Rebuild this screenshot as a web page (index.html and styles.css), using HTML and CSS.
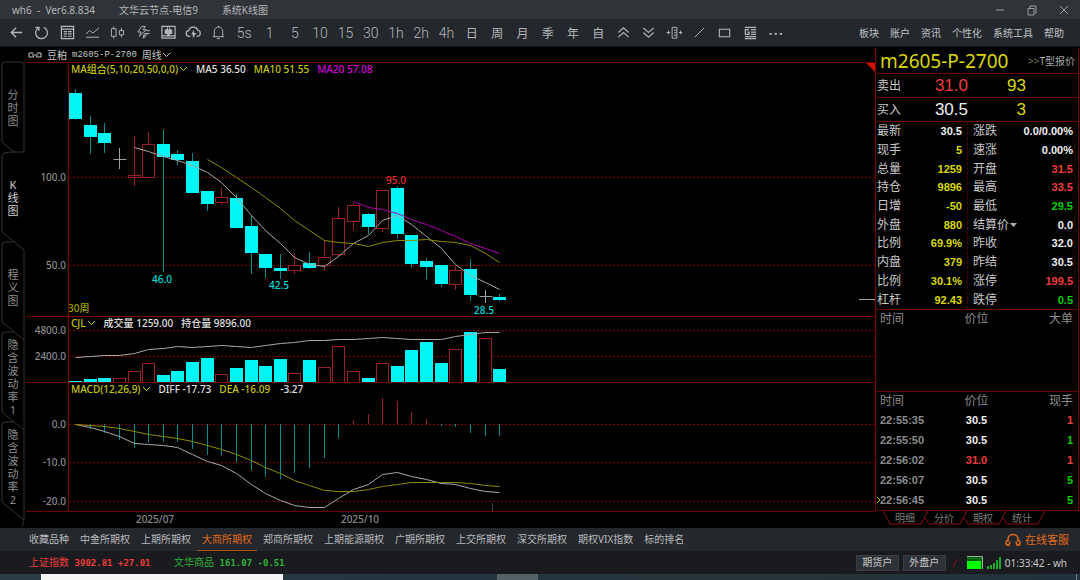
FILE: index.html
```html
<!DOCTYPE html>
<html lang="zh-CN">
<head>
<meta charset="utf-8">
<title>wh6 - Ver6.8.834</title>
<link rel="stylesheet" href="styles.css">
</head>
<body>
<header class="titlebar">
  <span>wh6&nbsp; -&nbsp; Ver6.8.834</span>
  <span>文华云节点-电信9</span>
  <span>系统K线图</span>
  <div class="window-controls">
    <button type="button" aria-label="最小化"><svg width="12" height="12" viewBox="0 0 12 12"><path d="M2 6H10"/></svg></button>
    <button type="button" aria-label="还原"><svg width="12" height="12" viewBox="0 0 12 12"><path d="M2 4.500H8V11H2ZM4 4V2H10V9H8.500"/></svg></button>
    <button type="button" aria-label="关闭"><svg width="12" height="12" viewBox="0 0 12 12"><path d="M2 2L10 10M10 2L2 10"/></svg></button>
  </div>
</header>

<div class="toolbar">
  <div class="tools">
    <button type="button" aria-label="返回"><svg class="icon" viewBox="0 0 16 16"><path stroke-width="1.500" d="M14 8H3M7.500 3L2.500 8L7.500 13"/></svg></button>
    <button type="button" aria-label="刷新"><svg class="icon" viewBox="0 0 16 16"><path stroke-width="1.300" d="M5 2.800A6.300 6.300 0 1 0 10.500 2.500M1.500 2.500H5.300V6.300"/></svg></button>
    <button type="button" aria-label="报价"><svg class="icon" viewBox="0 0 16 16"><path stroke-width="1.300" d="M1.500 1.500H14.500V14.500H1.500ZM1.500 4.500H14.500M4 7H7.500M8.500 7H12.500M4 9.500H7.500M8.500 9.500H12.500M4 12H7.500M8.500 12H12.500"/></svg></button>
    <button type="button" aria-label="分时"><svg class="icon" viewBox="0 0 16 16"><path d="M1 9.500L5 6L8.500 8.500L15 3M1 13H15"/></svg></button>
    <button type="button" aria-label="K线"><svg class="icon" viewBox="0 0 16 16"><path d="M1.500 4H6.500V12H1.500ZM4 1.500V4M4 12V14.500M10 6H14.500V10.500H10ZM12.200 3V6M12.200 10.500V13"/></svg></button>
    <button type="button" aria-label="闪电"><svg class="icon" viewBox="0 0 16 16"><path d="M6 1.500H10L7.500 5H11L3.500 12L5.500 7.500H2ZM11 6H15M9 9H14.500M8.500 12L12 9.500M9 9L7.500 14L11 11.500"/></svg></button>
    <button type="button" aria-label="下单"><svg class="icon" viewBox="0 0 16 16"><path stroke-width="1.300" d="M1 1.500H15V14H1ZM1 11.500H15"/><path class="solid" d="M4 5L6.500 4V2.500H7.500V5H8.500V2.500H9.500V4L12 5V9.500H9.500V12H6.500V9.500H4Z"/></svg></button>
    <button type="button" aria-label="云"><svg class="icon wide" viewBox="0 0 16 16"><path stroke-width="1.300" d="M5 12H3.500A3 3 0 0 1 3 6A5 5 0 0 1 12.500 5.500A3.300 3.300 0 0 1 12.500 12H11"/><path class="solid" d="M8.500 5L5.500 10H7.500L7 14.500L11 8.500H8.500Z"/></svg></button>
    <button type="button" aria-label="预警"><svg class="icon" viewBox="0 0 16 16"><path d="M2 12.500H14M3.500 12.500V7A4.500 5 0 0 1 12.500 7V12.500M8 2.500V1M6.500 14.500H9.500"/></svg></button>
    <button type="button">5s</button>
    <button type="button">1</button>
    <button type="button">5</button>
    <button type="button">10</button>
    <button type="button">15</button>
    <button type="button">30</button>
    <button type="button">1h</button>
    <button type="button">2h</button>
    <button type="button">4h</button>
    <button type="button" class="cjk">日</button>
    <button type="button" class="cjk">周</button>
    <button type="button" class="cjk">月</button>
    <button type="button" class="cjk">季</button>
    <button type="button" class="cjk">年</button>
    <button type="button" class="cjk">自</button>
    <button type="button" aria-label="上一个"><svg class="icon" viewBox="0 0 16 16"><path stroke-width="1.200" d="M2.500 8L8 3L13.500 8M2.500 13L8 8L13.500 13"/></svg></button>
    <button type="button" aria-label="下一个"><svg class="icon" viewBox="0 0 16 16"><path stroke-width="1.200" d="M2.500 3L8 8L13.500 3M2.500 8L8 13L13.500 8"/></svg></button>
    <button type="button" aria-label="测距"><svg class="icon wide" viewBox="0 0 18 16"><path d="M6.500 2.500H11.500V14H6.500ZM8.500 5.500H11M8.500 8.300H11M8.500 11H11M.500 8H4.500M2.500 6V10M13.500 8H17.500M15.500 6V10"/></svg></button>
    <button type="button" aria-label="画线"><svg class="icon" viewBox="0 0 16 16"><path d="M3 13L13 3"/></svg></button>
    <button type="button" aria-label="矩形"><svg class="icon" viewBox="0 0 16 16"><path stroke-width="1.200" d="M2.500 4.500H13.500V12.500H2.500Z"/></svg></button>
    <button type="button" aria-label="信息"><svg class="icon" viewBox="0 0 16 16"><path stroke-width="1.300" d="M2 2.500H14M8.500 5H14M8.500 7.500H14M8.500 10H14M2 12.500H14M2 14.500H14M6.500 5H2.500V10H6.500V7.500H4.500"/></svg></button>
    <button type="button" aria-label="更多"><svg class="icon" viewBox="0 0 16 16"><path class="solid" d="M1.500 8.500h2.500v2H1.500zM7 8.500h2.500v2H7zM12.500 8.500h2.500v2h-2.500z"/></svg></button>
  </div>
  <nav class="menu">
    <a href="#">板块</a><a href="#">账户</a><a href="#">资讯</a><a href="#">个性化</a><a href="#">系统工具</a><a href="#">帮助</a>
  </nav>
</div>

<main class="workspace">
  <nav class="side-tabs">
    <button type="button" class="boxed"><svg width="26" height="90"><path d="M24 90H14L2 80V3Q2 0 5 0H22Q24 0 24 3V90"/></svg><span>分</span><span>时</span><span>图</span></button>
    <button type="button" class="active"><svg width="26" height="90"><path d="M14 0Q2 0 2 4V80L24 98"/></svg><span>K</span><span>线</span><span>图</span></button>
    <button type="button"><svg width="26" height="90"><path d="M14 0H5Q2 0 2 3V80L24 98M24 8V90"/></svg><span>程</span><span>义</span><span>图</span></button>
    <button type="button"><svg width="26" height="90"><path d="M14 0H5Q2 0 2 3V80L24 98M24 0V90"/></svg><span>隐</span><span>含</span><span>波</span><span>动</span><span>率</span><span>1</span></button>
    <button type="button"><svg width="26" height="90"><path d="M14 0H5Q2 0 2 3V80L24 98L22 105M24 0V98"/></svg><span>隐</span><span>含</span><span>波</span><span>动</span><span>率</span><span>2</span></button>
  </nav>

  <section class="chart">
    <div class="chart-title">
      <svg width="14" height="8" viewBox="0 0 14 8"><path d="M5.500 2H1V6H5.500V5M8.500 2H13V6H8.500V5M4 4H10"/></svg>
      <span>豆粕</span><span class="code">m2605-P-2700</span>
      <button type="button" class="period">周线<svg width="9" height="6" viewBox="0 0 9 6"><path d="M1 1L4.500 4.500L8 1"/></svg></button>
    </div>
    <div class="pane price">
      <svg class="corner" width="9" height="9"><path d="M0 0H9V9Z"/></svg>
      <div class="legend"><button type="button" class="yellow">MA组合(5,10,20,50,0,0)<svg width="10" height="6" viewBox="0 0 10 6"><path d="M2 1L5.500 4.500L9 1"/></svg></button><span>MA5 36.50</span><span class="yellow">MA10 51.55</span><span class="magenta">MA20 57.08</span></div>
      <svg class="plot" id="price"></svg>
    </div>
    <div class="pane volume">
      <div class="legend"><button type="button" class="yellow">CJL<svg width="10" height="6" viewBox="0 0 10 6"><path d="M2 1L5.500 4.500L9 1"/></svg></button><span>成交量 1259.00</span><span>持仓量 9896.00</span></div>
      <svg class="plot" id="volume"></svg>
    </div>
    <div class="pane macd">
      <div class="legend"><button type="button" class="yellow">MACD(12,26,9)<svg width="10" height="6" viewBox="0 0 10 6"><path d="M2 1L5.500 4.500L9 1"/></svg></button><span>DIFF -17.73</span><span class="yellow">DEA -16.09</span><span class="hist">-3.27</span></div>
      <svg class="plot" id="macd"></svg>
    </div>
    <svg class="dates" id="dates"></svg>
  </section>

  <aside class="quote">
    <div class="quote-box">
      <div class="contract"><h1>m2605-P-2700</h1><a href="#"><i>&gt;&gt;</i>T型报价</a></div>
      <div class="bidask"><span>卖出</span><b class="red">31.0</b><b class="yellow">93</b></div>
      <div class="bidask"><span>买入</span><b>30.5</b><b class="yellow">3</b></div>
      <div class="stats">
        <dl>
          <div><dt>最新</dt><dd>30.5</dd></div>
          <div><dt>现手</dt><dd class="yellow">5</dd></div>
          <div><dt>总量</dt><dd class="yellow">1259</dd></div>
          <div><dt>持仓</dt><dd class="yellow">9896</dd></div>
          <div><dt>日增</dt><dd class="yellow">-50</dd></div>
          <div><dt>外盘</dt><dd class="yellow">880</dd></div>
          <div><dt>比例</dt><dd class="yellow">69.9%</dd></div>
          <div><dt>内盘</dt><dd class="yellow">379</dd></div>
          <div><dt>比例</dt><dd class="yellow">30.1%</dd></div>
          <div><dt>杠杆</dt><dd class="yellow">92.43</dd></div>
        </dl>
        <dl>
          <div><dt>涨跌</dt><dd>0.0/0.00%</dd></div>
          <div><dt>速涨</dt><dd>0.00%</dd></div>
          <div><dt>开盘</dt><dd class="red">31.5</dd></div>
          <div><dt>最高</dt><dd class="red">33.5</dd></div>
          <div><dt>最低</dt><dd class="green">29.5</dd></div>
          <div><dt><button type="button">结算价<svg width="8" height="4"><path d="M1 0H8L4.500 4Z"/></svg></button></dt><dd>0.0</dd></div>
          <div><dt>昨收</dt><dd>32.0</dd></div>
          <div><dt>昨结</dt><dd>30.5</dd></div>
          <div><dt>涨停</dt><dd class="red">199.5</dd></div>
          <div><dt>跌停</dt><dd class="green">0.5</dd></div>
        </dl>
      </div>
      <div class="large-orders">
        <table><thead><tr><th>时间</th><th>价位</th><th>大单</th></tr></thead></table>
      </div>
      <div class="trades">
        <svg class="marker" width="5" height="8"><path d="M1 1L4 4L1 7"/></svg>
        <table>
          <thead><tr><th>时间</th><th>价位</th><th>现手</th></tr></thead>
          <tbody>
            <tr><td>22:55:35</td><td>30.5</td><td class="red">1</td></tr>
            <tr><td>22:55:50</td><td>30.5</td><td class="green">1</td></tr>
            <tr><td>22:56:02</td><td class="red">31.0</td><td class="red">1</td></tr>
            <tr><td>22:56:07</td><td>30.5</td><td class="green">5</td></tr>
            <tr><td>22:56:45</td><td>30.5</td><td class="green">5</td></tr>
          </tbody>
        </table>
      </div>
    </div>
    <nav class="quote-tabs">
      <button type="button"><svg width="46" height="14"><path d="M0 0L7 13H38L45 0"/></svg>明细</button>
      <button type="button"><svg width="46" height="14"><path d="M3 7L7 13H38L45 0"/></svg>分价</button>
      <button type="button"><svg width="46" height="14"><path d="M3 7L7 13H38L45 0"/></svg>期权</button>
      <button type="button"><svg width="46" height="14"><path d="M3 7L7 13H38L45 0"/></svg>统计</button>
    </nav>
  </aside>
</main>

<div class="markets">
  <nav>
    <a href="#">收藏品种</a><a href="#">中金所期权</a><a href="#">上期所期权</a><a href="#" class="active">大商所期权</a><a href="#">郑商所期权</a><a href="#">上期能源期权</a><a href="#">广期所期权</a><a href="#">上交所期权</a><a href="#">深交所期权</a><a href="#">期权VIX指数</a><a href="#">标的排名</a>
  </nav>
  <a href="#" class="service"><svg width="18" height="14" viewBox="0 0 18 14"><path d="M5 12.500L6 8.500M5 7.500Q2 7 2 10Q2 12.500 5 12.500M4 8Q3.500 1.500 9 1.500Q14.500 1.500 14 8M13 12.500L12 8.500M13 7.500Q16 7 16 10Q16 12.500 13 12.500"/></svg>在线客服</a>
</div>

<footer class="status">
  <span class="index red">上证指数 <code>3902.81 +27.01</code></span>
  <span class="index up-green">文华商品 <code>161.07 -0.51</code></span>
  <div class="account">
    <button type="button">期货户</button>
    <button type="button">外盘户</button>
    <svg class="slash" width="6" height="10"><path d="M1 9L5 1"/></svg>
    <svg width="16" height="14"><rect x="0" y="0" width="15" height="13" fill="#005a10" stroke="none"/><path d="M0 .500H15.500V13" fill="none" stroke="#9ab09a"/><path d="M0 2.500H15" stroke="#00a000" stroke-dasharray="1 1"/><rect x="0" y="5" width="14" height="8" fill="#00ff00" stroke="none"/></svg>
    <svg width="14" height="14"><path d="M0 10h2v3H0zM3 9h2v4H3zM6 7h2v6H6zM9 4h2v9H9zM12 1h2v12h-2z" fill="#1fa82e" stroke="none"/></svg>
    <span>01:33:42 - wh</span>
  </div>
</footer>
<div class="taskbar"><span class="search"></span><span class="task"></span><span class="edge"></span></div>
<script src="chart.js"></script>
</body>
</html>
```

FILE: styles.css
```css
* { box-sizing: border-box; }
html, body { height: 100%; }
body {
  margin: 0;
  min-height: 580px;
  display: flex;
  flex-direction: column;
  background: #000;
  color: #c8c8c8;
  font: 10px/14px "Noto Sans", "Noto Sans CJK SC", sans-serif;
  overflow: hidden;
}
button { appearance: none; border: 0; padding: 0; margin: 0; background: none; color: inherit; font: inherit; white-space: nowrap; }
a { color: inherit; text-decoration: none; white-space: nowrap; }
svg { fill: none; stroke: currentColor; display: block; flex: none; }
.yellow { color: #c8c800; }
.magenta { color: #d800d8; }
.red { color: #f03c3c; }
.green { color: #00d000; }
.up-green { color: #30b038; }

.titlebar { display: flex; gap: 24px; align-items: center; height: 19px; padding: 0 10px 0 12px; background: #303338; color: #b4b6b8; flex: none; }
.window-controls { margin-left: auto; display: flex; gap: 20px; color: #9a9c9e; }

.toolbar { display: flex; align-items: center; justify-content: space-between; height: 28px; padding: 0 16px 0 4px; background: #24282d; border-bottom: 1px solid #14171a; flex: none; }
.tools { flex: 0 1 784px; display: grid; grid-auto-flow: column; grid-auto-columns: 1fr; align-items: center; justify-items: center; color: #b4b6b8; font: 300 14px/16px Roboto, sans-serif; }
.tools .cjk { font: 400 12px/16px "Noto Sans CJK SC", sans-serif; }
.icon { width: 15px; height: 15px; }
.icon.wide { width: 17px; }
.icon .solid { fill: currentColor; stroke: none; }
.menu { display: flex; gap: 11px; color: #c0c2c4; }

.workspace { flex: 1 0 auto; display: flex; min-width: 0; }
.side-tabs { flex: none; width: 26px; padding-top: 15px; display: flex; flex-direction: column; color: #8c8c8c; }
.side-tabs button { position: relative; height: 90px; display: flex; flex-direction: column; align-items: center; justify-content: center; font-size: 11px; line-height: 13px; }
.side-tabs svg { position: absolute; top: 0; left: 0; stroke: #333; overflow: visible; }
.side-tabs .active { color: #d0d0d0; }

.chart { flex: 1; min-width: 0; display: flex; flex-direction: column; }
.chart-title { display: flex; align-items: center; gap: 5px; height: 15px; padding-left: 2px; }
.chart-title .code { font: 9px/14px "Liberation Mono", monospace; }
.period, .legend button { display: flex; align-items: center; }
.pane { position: relative; border-top: 1px solid #700000; }
.legend { display: flex; gap: 8px; align-items: center; height: 15px; padding: 0 0 3px 45px; line-height: 12px; color: #e0e0e0; font-weight: 500; }
.legend .yellow { color: #c8c800; }
.legend .magenta { color: #d800d8; }
.legend .hist { padding-left: 2px; }
.volume .legend, .macd .legend { height: 13px; padding-bottom: 1px; }
.pane::before { content: ""; position: absolute; left: 42px; top: 0; bottom: 0; border-left: 1px solid #700000; }
.macd { border-bottom: 1px solid #700000; }
.corner { position: absolute; right: 0; top: 0; fill: #c81400; stroke: none; }
.plot { width: 100%; overflow: visible; }
#price { height: 238px; }
#volume { height: 52px; }
#macd { height: 115px; }
.dates { width: 100%; height: 16px; }
.plot text, .dates text { stroke: none; fill: #8c8c8c; font-weight: 500; }
.plot .grid { stroke: #800000; stroke-dasharray: 2 2; }
.plot .down { stroke: #008c8c; }
.plot .down-body { fill: #00f5f5; stroke: none; }
.plot .up { stroke: #982020; }
.plot .up-body { fill: #000; stroke: #982020; }
.plot .flat { stroke: #a0a0a0; }
.plot .tick { stroke: #484848; }
.plot .line-white { stroke: #a8a8a8; }
.plot .line-yellow { stroke: #8c8c00; }
.plot .line-magenta { stroke: #b000b0; }
.plot text.cyan { fill: #00dcdc; }
.plot text.high { fill: #e03030; }
.plot text.weeks { fill: #a0a000; }

.quote { flex: 0 0 205px; padding: 1px 1px 0 0; display: flex; flex-direction: column; }
.quote-box { border: 1px solid #700000; border-top: 0; }
.contract { display: flex; align-items: center; justify-content: space-between; height: 25px; padding: 0 3px 0 4px; }
.contract h1 { margin: 0; font: 19px/24px "Noto Sans", sans-serif; color: #d8d800; }
.contract a { color: #a8a8a8; }
.contract i { font-style: normal; color: #787858; }
.bidask { display: grid; grid-template-columns: 31px 60px 58px; align-items: center; height: 24px; padding-left: 1px; border-top: 1px solid #700000; font-size: 12px; line-height: 16px; white-space: nowrap; }
.bidask b { font: 17px/20px "Liberation Sans", sans-serif; text-align: right; }
.bidask b.yellow { color: #d8d800; }
.bidask b:not([class]) { color: #f0f0f0; }
.stats { display: grid; grid-template-columns: 91px 1fr; border-top: 1px solid #700000; height: 188px; font-size: 12px; }
.stats dl { margin: 0; display: flex; flex-direction: column; justify-content: space-around; padding: 0 5px 0 1px; }
.stats dl + dl { border-left: 1px dashed #500000; padding-left: 5px; }
.stats dl div { display: flex; justify-content: space-between; align-items: center; line-height: 18px; }
.stats dt button { display: flex; align-items: center; }
.stats dt svg { fill: #b0b0b0; stroke: none; }
dd, td { margin: 0; font: bold 11px/18px "Liberation Sans", sans-serif; }
dd:not([class]), td:not([class]) { color: #f0f0f0; }
dd.yellow { color: #d8d800; }
.large-orders, .trades { position: relative; border-top: 1px solid #700000; }
.large-orders { height: 82px; }
table { width: 100%; border-collapse: collapse; table-layout: fixed; color: #8c8c8c; }
th { padding: 0 5px 0 4px; font-weight: 400; font-size: 12px; line-height: 18px; text-align: center; }
td { padding: 0 5px 0 4px; line-height: 20px; text-align: center; }
th:first-child, td:first-child { text-align: left; }
td:first-child:not([class]) { color: #8c8c8c; }
th:last-child, td:last-child { text-align: right; }
.marker { position: absolute; left: 0; bottom: 6px; stroke: #c8c800; }
.quote-tabs { display: flex; padding-left: 8px; color: #7c7c7c; }
.quote-tabs button { position: relative; width: 39px; height: 14px; padding-left: 5px; line-height: 13px; }
.quote-tabs svg { position: absolute; left: 0; top: 0; stroke: #8c1010; }

.markets { display: flex; align-items: stretch; justify-content: space-between; height: 23px; padding: 0 11px 0 24px; background: #24272c; flex: none; }
.markets nav { display: flex; gap: 1px; color: #b8babc; }
.markets nav a { padding: 4px 5px 3px; border-bottom: 1px solid transparent; }
.markets nav a.active { color: #e06a1c; border-color: #a05018; }
.service { display: flex; align-items: center; gap: 3px; color: #e06a1c; font-size: 11px; }
.service svg { stroke-width: 1.5; }

.status { display: flex; align-items: center; height: 23px; padding: 0 13px 0 29px; background: #1a1b1f; flex: none; }
.index { width: 145px; white-space: nowrap; }
.index code { font: bold 9px/14px "DejaVu Sans Mono", monospace; padding-left: 3px; }
.account { margin-left: auto; display: flex; align-items: center; gap: 4px; }
.account button { width: 43px; height: 16px; background: #2e3136; border: 1px solid #3a3d42; line-height: 13px; }
.account .slash { margin: 0 5px 0 2px; stroke: #8c1010; }
.taskbar { display: flex; height: 6px; flex: none; background: linear-gradient(90deg, #2c3c44, #243540 40%, #283438 70%, #20323c); padding-left: 41px; }
.search { width: 242px; background: #f4f4f4; }
.task { width: 41px; margin-left: 214px; background: #566266; }
.edge { width: 1px; margin: 0 3px 0 auto; background: #708088; }
```

FILE: chart.js
```js
const NS = 'http://www.w3.org/2000/svg';
const STEP = 14.63;
const FIRST = 49;
const cx = i => Math.round(FIRST + i * STEP) + 0.5;

// kind, high, top, bottom, low
const candles = [
  ['d', 89, 93, 119, 120], ['d', 116, 125, 137, 154], ['d', 123, 133, 143, 153], ['f', 148, 160, 160, 169],
  ['u', 136, 175, 177, 186], ['u', 132, 144, 177, 178], ['d', 130, 144, 157, 272], ['d', 150, 154, 160, 165],
  ['d', 153, 161, 193, 193], ['d', 191, 191, 204, 211], ['u', 188, 197, 202, 205], ['d', 194, 198, 228, 228],
  ['d', 215, 226, 253, 274], ['d', 254, 254, 268, 278], ['d', 254, 268, 271, 279], ['u', 254, 265, 270, 274],
  ['d', 252, 263, 268, 269], ['u', 240, 257, 265, 271], ['u', 207, 218, 254, 256], ['u', 203, 205, 221, 230],
  ['d', 213, 214, 227, 234], ['u', 190, 190, 228, 232], ['d', 186, 188, 234, 239], ['d', 235, 235, 264, 268],
  ['d', 258, 261, 267, 279], ['d', 265, 265, 284, 287], ['u', 266, 270, 284, 290], ['d', 259, 269, 295, 301],
  ['f', 290, 297, 297, 303], ['d', 294, 297, 300, 301]
];
const ma5 = [147, 151, 156, 160, 165, 172, 182, 197, 215, 230, 243, 257, 264, 266, 256, 243, 235, 220, 215, 224, 236, 248, 264, 275, 282, 289];
const ma10 = [159, 167, 177, 187, 197, 208, 220, 230, 240, 242, 243, 246, 242, 240, 240, 239, 241, 242, 245, 253, 262];
const ma20 = [201, 207, 209, 213, 219, 224, 230, 236, 243, 248, 253];
const volumes = [381, 379, 378, 378, 371, 363, 375, 371, 362, 358, 374, 368, 360, 366, 359, 373, 360, 367, 346, 371, 378, 363, 366, 350, 342, 363, 349, 332, 338, 369];
const interest = [357, 356, 355, 355, 353, 349, 348, 346, 347, 346, 345, 346, 347, 345, 343, 342, 340, 340, 339, 339, 338, 337, 338, 339, 339, 339, 336, 334, 332, 332];
const hist = [424, 429, 433, 440, 448, 443, 442, 442, 449, 455, 455, 462, 470, 477, 479, 473, 468, 458, 438, 420, 414, 398, 401, 412, 419, 426, 427, 433, 436, 436];
const diff = [424, 427, 431, 436, 443, 444, 445, 447, 454, 461, 465, 473, 484, 493, 500, 505, 507, 507, 498, 489, 484, 474, 472, 476, 479, 483, 484, 488, 491, 492];
const dea = [424, 425, 426, 428, 431, 434, 436, 438, 441, 445, 449, 454, 460, 467, 473, 480, 485, 490, 491, 491, 489, 486, 484, 482, 482, 482, 482, 483, 485, 486];

function pane(id, top) {
  const svg = document.getElementById(id);
  const add = (tag, attrs, text) => {
    const el = document.createElementNS(NS, tag);
    for (const k in attrs) el.setAttribute(k, attrs[k]);
    if (text) el.textContent = text;
    svg.appendChild(el);
  };
  return {
    line: (x1, y1, x2, y2, cls) => add('line', { x1, y1: y1 - top, x2, y2: y2 - top, class: cls }),
    rect: (x, y, width, height, cls) => add('rect', { x, y: y - top, width, height, class: cls }),
    text: (x, y, s, anchor, cls = '') => add('text', { x, y: y - top, 'text-anchor': anchor, class: cls }, s),
    path: (start, ys, cls) => add('polyline', { points: ys.map((y, i) => cx(start + i) + ',' + (y - top + 0.5)).join(' '), class: cls }),
    grid(y, label) { this.line(43, y + 0.5, '100%', y + 0.5, 'grid'); this.text(40, y + 4, label, 'end'); }
  };
}

const price = pane('price', 78);
price.grid(177, '100.0');
price.grid(265, '50.0');
candles.forEach(([kind, high, top, bottom, low], i) => {
  const x = cx(i);
  if (kind === 'f') {
    price.line(x, high, x, low, 'flat');
    price.line(x - 6, top - 0.5, x + 7, top - 0.5, 'flat');
  } else if (kind === 'd') {
    price.line(x, high, x, low, 'down');
    price.rect(x - 6.5, top, 13, bottom - top, 'down-body');
  } else {
    price.line(x, high, x, low, 'up');
    price.rect(x - 6, top + 0.5, 12, bottom - top, 'up-body');
  }
});
price.path(4, ma5, 'line-white');
price.path(9, ma10, 'line-yellow');
price.path(19, ma20, 'line-magenta');
price.text(136, 283, '46.0', 'middle', 'cyan');
price.text(253, 289, '42.5', 'middle', 'cyan');
price.text(370, 184, '95.0', 'middle', 'high');
price.text(458, 314, '28.5', 'middle', 'cyan');
price.text(42, 312, '30周', 'start', 'weeks');
const edge = document.createElementNS(NS, 'svg');
edge.setAttribute('x', '100%');
edge.setAttribute('overflow', 'visible');
edge.innerHTML = '<path class="flat" d="M-16 221.500H0"/>';
document.getElementById('price').appendChild(edge);

const volume = pane('volume', 330);
volume.grid(330, '4800.0');
volume.grid(356, '2400.0');
volumes.forEach((top, i) => {
  const x = cx(i);
  if (candles[i][0] === 'd') volume.rect(x - 6.5, top, 13, 382 - top, 'down-body');
  else volume.rect(x - 6, top + 0.5, 12, 382 - top, 'up-body');
});
volume.path(0, interest, 'line-white');

const macd = pane('macd', 396);
macd.grid(424, '0.0');
macd.grid(462, '-10.0');
macd.grid(501, '-20.0');
hist.forEach((y, i) => macd.line(cx(i), 424, cx(i), y, y > 424 ? 'down' : 'up'));
macd.path(0, diff, 'line-white');
macd.path(0, dea, 'line-yellow');
macd.line(466.5, 503, 466.5, 511, 'tick');

const dates = pane('dates', 512);
dates.text(129, 523, '2025/07', 'middle');
dates.text(334, 523, '2025/10', 'middle');
```
